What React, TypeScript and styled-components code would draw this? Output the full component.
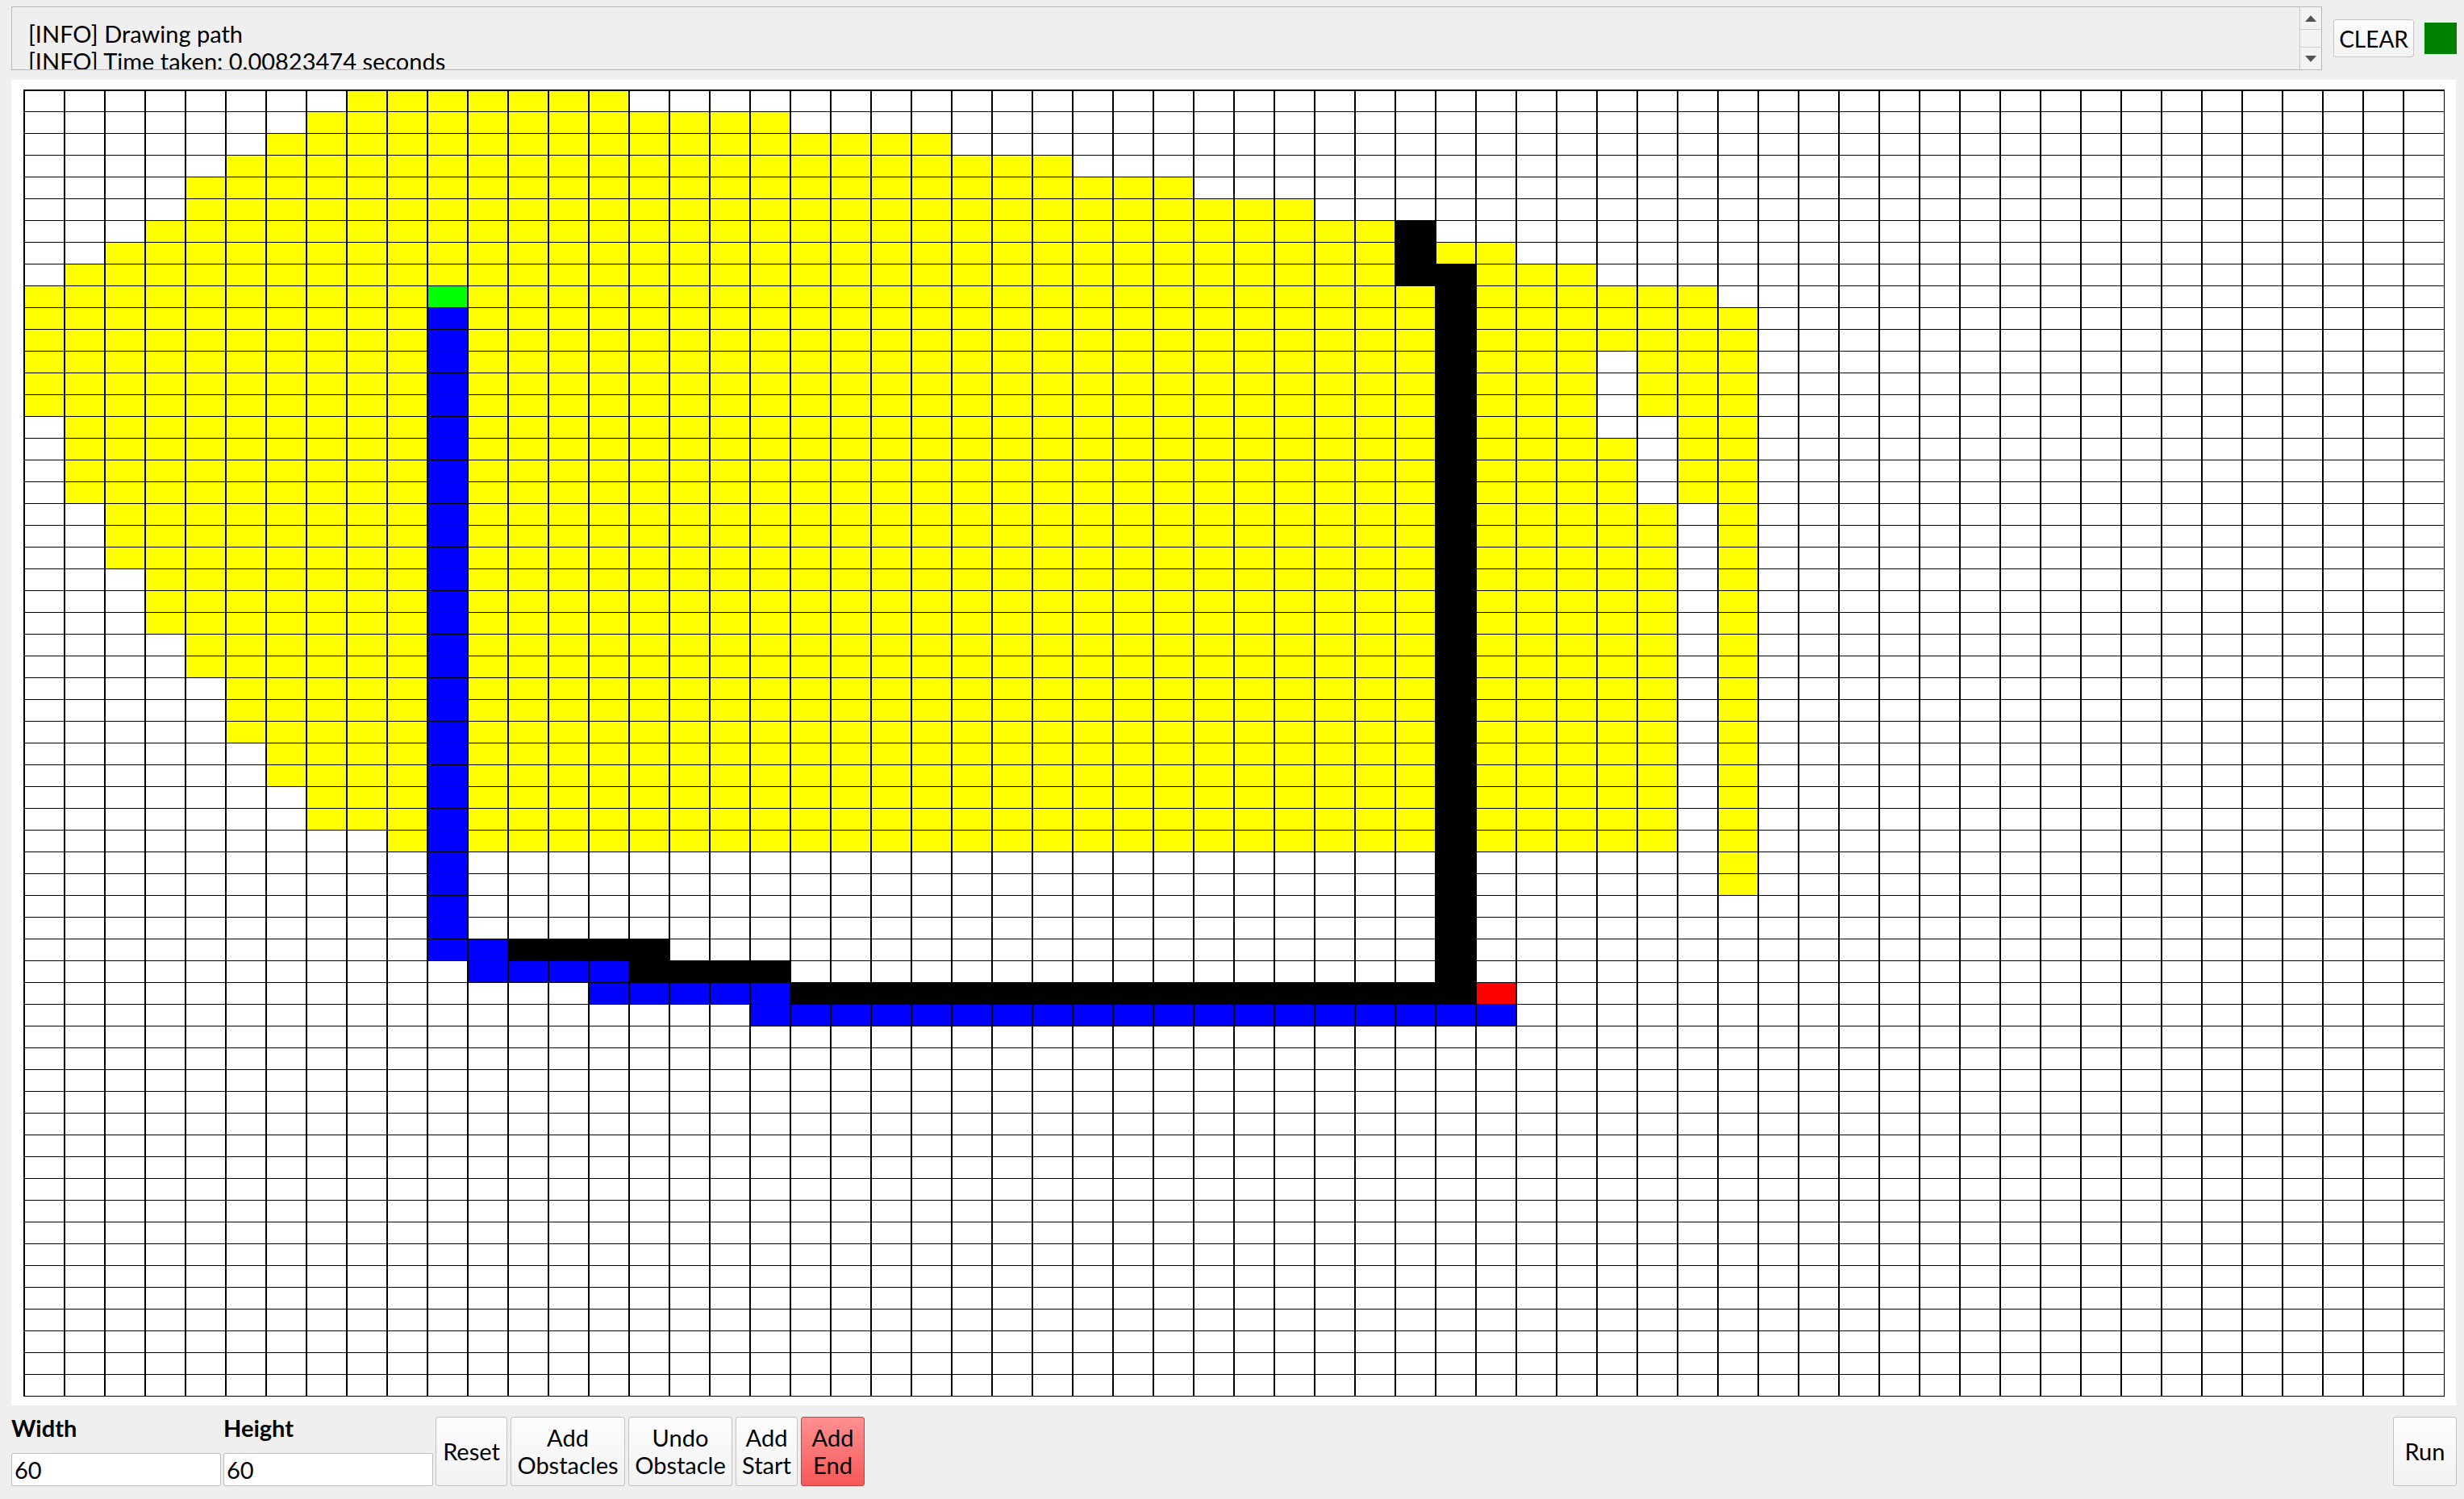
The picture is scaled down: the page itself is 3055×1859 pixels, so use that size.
import styled, { createGlobalStyle, css } from "styled-components";

type Kind = "empty" | "visited" | "wall" | "path" | "start" | "end";

const ROWS = 60;
const COLS = 60;

const GlobalStyle = createGlobalStyle`
  html, body {
    margin: 0;
    padding: 0;
    background: #efefef;
  }
  body {
    font-family: Lato, "Noto Sans", sans-serif;
    color: #000;
  }
  * {
    box-sizing: border-box;
  }
`;

const Window = styled.div`
  display: flex;
  flex-direction: column;
  height: 100vh;
  padding: 8px 9px 16px 14px;
`;

const TopBar = styled.div`
  display: flex;
  align-items: center;
  height: 79px;
`;

const LogBox = styled.div`
  flex: 1;
  display: flex;
  height: 100%;
  border: 1px solid #b8b8b8;
  background: #efefef;
  overflow: hidden;
`;

const LogText = styled.div`
  flex: 1;
  padding: 16px 0 0 20px;
  font-size: 29px;
  line-height: 34px;
  white-space: pre;
  overflow: hidden;
`;

const ScrollBar = styled.div`
  width: 27px;
  display: flex;
  flex-direction: column;
  border-left: 1px solid #c6c6c6;
  background: #f3f3f3;
`;

const ScrollArrow = styled.div<{ $down?: boolean }>`
  height: 28px;
  display: flex;
  align-items: center;
  justify-content: center;
  ${(p) =>
    p.$down
      ? css`
          border-top: 1px solid #d0d0d0;
        `
      : css`
          border-bottom: 1px solid #d0d0d0;
        `}
`;

const ScrollTrack = styled.div`
  flex: 1;
`;

const ClearButton = styled.button`
  margin-left: 14px;
  width: 100px;
  height: 47px;
  border: 1px solid #c4c4c4;
  border-radius: 3px;
  background: linear-gradient(#fdfdfd, #f3f3f3);
  font-family: inherit;
  font-size: 28px;
  color: #000;
  padding: 0;
`;

const StatusLight = styled.div`
  margin-left: 13px;
  width: 40px;
  height: 39px;
  background: #008000;
`;

const Panel = styled.div`
  flex: 1;
  display: flex;
  margin-top: 12px;
  margin-right: 1px;
  padding: 12px 14px 11px 15px;
  background: #fff;
`;

const Board = styled.div`
  flex: 1;
  display: grid;
  grid-template-columns: repeat(${COLS}, 1fr);
  grid-template-rows: repeat(${ROWS}, 1fr);
  gap: 1.5px;
  padding: 1.5px;
  background: #000;
`;

const cellColors: Record<Kind, string> = {
  empty: "#ffffff",
  visited: "#ffff00",
  wall: "#000000",
  path: "#0000ff",
  start: "#00ff00",
  end: "#ff0000",
};

const Cell = styled.div<{ $kind: Kind }>`
  background: ${(p) => cellColors[p.$kind]};
`;

const BottomBar = styled.div`
  display: flex;
  height: 86px;
  margin-top: 14px;
`;

const Fields = styled.div`
  display: flex;
  gap: 3px;
  margin-right: 3px;
`;

const Field = styled.label`
  width: 260px;
  display: flex;
  flex-direction: column;
  justify-content: space-between;
`;

const FieldLabel = styled.span`
  font-weight: 700;
  font-size: 29px;
  line-height: 28px;
`;

const FieldInput = styled.input`
  height: 41px;
  width: 100%;
  border: 1px solid #bdbdbd;
  border-radius: 2px;
  background: #fff;
  padding: 0 3px;
  font-family: inherit;
  font-size: 29px;
  color: #000;
  outline: none;
`;

const Buttons = styled.div`
  display: flex;
  gap: 4px;
`;

const ToolButton = styled.button<{ $w: number; $active?: boolean }>`
  width: ${(p) => p.$w}px;
  height: 100%;
  padding: 0;
  border: 1px solid #c2c2c2;
  border-radius: 3px;
  background: linear-gradient(#fdfdfd, #f2f2f2);
  font-family: inherit;
  font-size: 29px;
  line-height: 33.7px;
  color: #000;
  text-align: center;
  ${(p) =>
    p.$active &&
    css`
      border-color: #cf3b3b;
      background: linear-gradient(#ff9090, #f65858);
    `}
`;

const Spacer = styled.div`
  flex: 1;
`;

type Span = [number, number];

function visitedSpans(r: number): Span[] {
  const top: Span[][] = [
    [[8, 14]],
    [[7, 18]],
    [[6, 22]],
    [[5, 25]],
    [[4, 28]],
    [[4, 31]],
    [[3, 33]],
    [[2, 33], [35, 36]],
    [[1, 33], [36, 38]],
    [[0, 34], [36, 41]],
    [[0, 34], [36, 42]],
    [[0, 34], [36, 42]],
    [[0, 34], [36, 38], [40, 42]],
    [[0, 34], [36, 38], [40, 42]],
    [[0, 34], [36, 38], [40, 42]],
    [[1, 34], [36, 38], [41, 42]],
    [[1, 34], [36, 39], [41, 42]],
    [[1, 34], [36, 39], [41, 42]],
    [[1, 34], [36, 39], [41, 42]],
  ];
  if (r < top.length) return top[r];
  if (r <= 34) {
    let left = 2;
    if (r >= 22) left = 3;
    if (r >= 25) left = 4;
    if (r >= 27) left = 5;
    if (r >= 30) left = 6;
    if (r >= 32) left = 7;
    if (r === 34) left = 9;
    return [[left, 34], [36, 40], [42, 42]];
  }
  if (r <= 36) return [[42, 42]];
  return [];
}

function buildBoard(): Kind[][] {
  const grid: Kind[][] = [];
  for (let r = 0; r < ROWS; r++) {
    const row: Kind[] = new Array(COLS).fill("empty");
    visitedSpans(r).forEach(([a, b]) => {
      for (let c = a; c <= b; c++) row[c] = "visited";
    });
    grid.push(row);
  }
  const fill = (r: number, a: number, b: number, k: Kind) => {
    for (let c = a; c <= b; c++) grid[r][c] = k;
  };

  // walls
  fill(6, 34, 34, "wall");
  fill(7, 34, 34, "wall");
  fill(8, 34, 35, "wall");
  for (let r = 9; r <= 40; r++) grid[r][35] = "wall";
  fill(39, 12, 15, "wall");
  fill(40, 15, 18, "wall");
  fill(41, 19, 35, "wall");

  // path
  for (let r = 10; r <= 39; r++) grid[r][10] = "path";
  fill(39, 11, 11, "path");
  fill(40, 11, 14, "path");
  fill(41, 14, 18, "path");
  fill(42, 18, 36, "path");

  grid[9][10] = "start";
  grid[41][36] = "end";
  return grid;
}

const board = buildBoard();

function Arrow({ down }: { down?: boolean }) {
  return (
    <svg width="14" height="8" viewBox="0 0 14 8">
      <polygon
        points={down ? "0,0 14,0 7,8" : "0,8 14,8 7,0"}
        fill="#555"
      />
    </svg>
  );
}

function App() {
  return (
    <>
      <GlobalStyle />
      <Window>
        <TopBar>
          <LogBox>
            <LogText>
              {"[INFO] Drawing path\n[INFO] Time taken: 0.00823474 seconds"}
            </LogText>
            <ScrollBar>
              <ScrollArrow>
                <Arrow />
              </ScrollArrow>
              <ScrollTrack />
              <ScrollArrow $down>
                <Arrow down />
              </ScrollArrow>
            </ScrollBar>
          </LogBox>
          <ClearButton>CLEAR</ClearButton>
          <StatusLight />
        </TopBar>

        <Panel>
          <Board>
            {board.map((row, r) =>
              row.map((kind, c) => <Cell key={`${r}-${c}`} $kind={kind} />)
            )}
          </Board>
        </Panel>

        <BottomBar>
          <Fields>
            <Field>
              <FieldLabel>Width</FieldLabel>
              <FieldInput defaultValue="60" />
            </Field>
            <Field>
              <FieldLabel>Height</FieldLabel>
              <FieldInput defaultValue="60" />
            </Field>
          </Fields>
          <Buttons>
            <ToolButton $w={89}>Reset</ToolButton>
            <ToolButton $w={142}>
              Add
              <br />
              Obstacles
            </ToolButton>
            <ToolButton $w={129}>
              Undo
              <br />
              Obstacle
            </ToolButton>
            <ToolButton $w={77}>
              Add
              <br />
              Start
            </ToolButton>
            <ToolButton $w={79} $active>
              Add
              <br />
              End
            </ToolButton>
          </Buttons>
          <Spacer />
          <ToolButton $w={79}>Run</ToolButton>
        </BottomBar>
      </Window>
    </>
  );
}

export default App;
